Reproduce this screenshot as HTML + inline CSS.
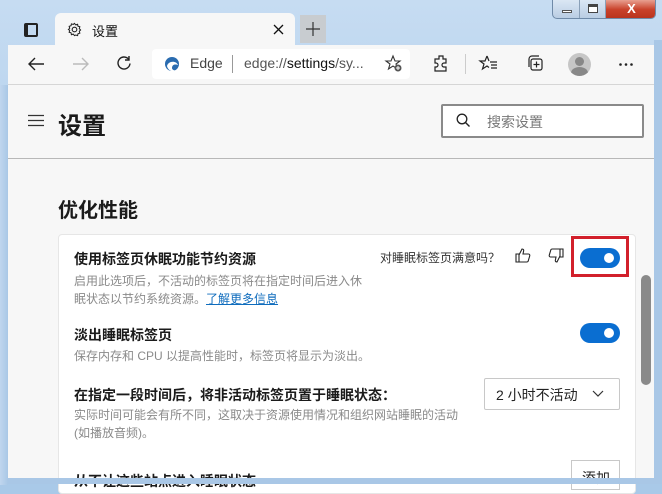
<!DOCTYPE html>
<html><head><meta charset="utf-8"><style>
*{box-sizing:border-box;margin:0;padding:0}
body{width:662px;height:484px;overflow:hidden;background:#a9c9e8;font-family:"Liberation Sans","Noto Sans CJK SC",sans-serif;position:relative}
.abs{position:absolute}
.frame{left:0;top:0;width:662px;height:484px;background:linear-gradient(180deg,#c6dcf2 0%,#b4d0ec 40%,#a6c6e6 100%)}
.tab{left:55px;top:13px;width:240px;height:34px;background:#f7f7f7;border-radius:6px 6px 0 0}
.toolbar{left:8px;top:45px;width:646px;height:40px;background:#f7f7f7;border-bottom:1px solid #d6d6d6}
.addr{left:152px;top:49px;width:258px;height:30px;background:#fff;border-radius:4px}
.content{left:8px;top:85px;width:646px;height:393px;background:#f7f7f7}
.card{left:58px;top:234px;width:578px;height:260px;background:#fff;border:1px solid #e6e6e6;border-radius:4px}
.t{font-size:14px;color:#1b1b1b;font-weight:600}
.d{font-size:12px;color:#8a8a8a;line-height:18px}
.tog{width:40px;height:20px;border-radius:10px;background:#0a6ed1}
.tog::after{content:"";position:absolute;right:6px;top:5px;width:10px;height:10px;border-radius:5px;background:#fff}
svg{position:absolute;overflow:visible}
</style></head><body>
<div class="abs frame"></div>
<div class="abs" style="left:552px;top:0;width:104px;height:19px;border:1px solid #6f8aa8;border-top:none;border-radius:0 0 5px 5px;background:linear-gradient(#dbe7f4,#b9cde3);overflow:hidden">
<div class="abs" style="left:0;top:0;width:27px;height:19px;border-right:1px solid #8aa0b8"></div>
<div class="abs" style="left:9px;top:10px;width:10px;height:3px;background:#fff;border:1px solid #555"></div>
<div class="abs" style="left:27px;top:0;width:26px;height:19px;border-right:1px solid #8aa0b8"></div>
<div class="abs" style="left:35px;top:4px;width:10px;height:9px;border:1px solid #444;border-top-width:3px;background:#fff"></div>
<div class="abs" style="left:53px;top:0;width:51px;height:19px;background:linear-gradient(#e8a090,#c9422b 50%,#b8321c)"></div>
<div class="abs" style="left:53px;top:0;width:51px;height:19px;color:#fff;font-weight:bold;font-size:13px;text-align:center;line-height:17px">X</div>
</div>
<div class="abs" style="left:24px;top:23px;width:14px;height:14px;border:2px solid #222;border-radius:2px;border-left-width:4px"></div>
<div class="abs tab"></div>
<svg style="left:67px;top:22px" width="15" height="15" viewBox="0 0 16 16"><circle cx="8" cy="8" r="2.5" fill="none" stroke="#222" stroke-width="1.2"/><path d="M8 1.5l1.3 1.6 2-.6.4 2 2 .6-.6 2 1.4 1.4-1.4 1.4.6 2-2 .6-.4 2-2-.6L8 14.5l-1.3-1.6-2 .6-.4-2-2-.6.6-2L1.5 8l1.4-1.4-.6-2 2-.6.4-2 2 .6z" fill="none" stroke="#222" stroke-width="1.1"/></svg>
<div class="abs" style="left:92px;top:21px;font-size:13px;color:#111">设置</div>
<svg style="left:274px;top:25px" width="9" height="9"><path d="M0 0l9 9M9 0L0 9" stroke="#111" stroke-width="1.3"/></svg>
<div class="abs" style="left:300px;top:15px;width:26px;height:28px;background:#c8ccd0"></div>
<svg style="left:306px;top:22px" width="14" height="14"><path d="M7 0v14M0 7h14" stroke="#333" stroke-width="1.2"/></svg>
<div class="abs toolbar"></div>
<svg style="left:27px;top:56px" width="18" height="16"><path d="M17 8H2M8 2L2 8l6 6" fill="none" stroke="#222" stroke-width="1.4"/></svg>
<svg style="left:72px;top:56px" width="18" height="16"><path d="M1 8h15M10 2l6 6-6 6" fill="none" stroke="#bbb" stroke-width="1.4"/></svg>
<svg style="left:116px;top:55px" width="17" height="17"><path d="M14 8.5A6 6 0 1 1 12.5 4M13 1v4H9" fill="none" stroke="#222" stroke-width="1.4"/></svg>
<div class="abs addr"></div>
<svg style="left:164px;top:56px" width="16" height="16"><circle cx="8" cy="8" r="7" fill="#2a6cb0"/><path d="M3 10c1-5 9-6 11-1-2-1-6-1-6 3 0 2 3 3 5 2-3 3-9 1-10-4z" fill="#fff"/></svg>
<div class="abs" style="left:190px;top:55px;font-size:14px;color:#444">Edge</div>
<div class="abs" style="left:232px;top:55px;width:1px;height:18px;background:#999"></div>
<div class="abs" style="left:244px;top:55px;font-size:14px;color:#555">edge://<span style="color:#111">settings</span>/sy...</div>
<svg style="left:385px;top:55px" width="18" height="18"><path d="M8 1l2 5h5l-4 3 1.5 5L8 11l-4.5 3L5 9 1 6h5z" fill="none" stroke="#333" stroke-width="1.1"/><circle cx="13" cy="13" r="3.5" fill="#555"/><path d="M13 11v4M11 13h4" stroke="#fff" stroke-width="1"/></svg>
<svg style="left:432px;top:54px" width="18" height="18"><path d="M7 2h4v3h3v4h-2a2 2 0 0 0 0 4h2v4H3v-4h1a2 2 0 0 0 0-4H3V5h4z" fill="none" stroke="#222" stroke-width="1.2"/></svg>
<div class="abs" style="left:465px;top:54px;width:1px;height:20px;background:#ccc"></div>
<svg style="left:480px;top:55px" width="18" height="18"><path d="M7 1l2 5h-0M7 1L5 6H0l4 3-1.5 5L7 11l2 1.5" fill="none" stroke="#222" stroke-width="1.2"/><path d="M10 7h7M11 10h6M11 13h6" stroke="#222" stroke-width="1.2"/></svg>
<svg style="left:526px;top:54px" width="18" height="18"><rect x="5" y="5" width="11" height="11" rx="2" fill="none" stroke="#222" stroke-width="1.2"/><path d="M3 13V5a3 3 0 0 1 3-3h7M10.5 7.5v6M7.5 10.5h6" fill="none" stroke="#222" stroke-width="1.2"/></svg>
<div class="abs" style="left:568px;top:53px;width:23px;height:23px;border-radius:50%;background:#c6c6c6;overflow:hidden"><div class="abs" style="left:7px;top:4px;width:9px;height:9px;border-radius:50%;background:#888"></div><div class="abs" style="left:3px;top:14px;width:17px;height:12px;border-radius:50%;background:#888"></div></div>
<svg style="left:619px;top:63px" width="14" height="3"><circle cx="1.5" cy="1.5" r="1.3" fill="#222"/><circle cx="7" cy="1.5" r="1.3" fill="#222"/><circle cx="12.5" cy="1.5" r="1.3" fill="#222"/></svg>
<div class="abs content"></div>
<svg style="left:28px;top:115px" width="16" height="11"><path d="M0 .5h16M0 5.5h16M0 10.5h16" stroke="#333" stroke-width="1.2"/></svg>
<div class="abs" style="left:58px;top:106px;font-size:24px;font-weight:bold;color:#1b1b1b">设置</div>
<div class="abs" style="left:441px;top:104px;width:203px;height:34px;border:2px solid #8a8a8a;background:#fff;border-radius:2px"></div>
<svg style="left:456px;top:113px" width="14" height="15"><circle cx="6" cy="6" r="4.8" fill="none" stroke="#222" stroke-width="1.3"/><path d="M9.5 9.5l4 4" stroke="#222" stroke-width="1.4"/></svg>
<div class="abs" style="left:487px;top:112px;font-size:14px;color:#777">搜索设置</div>
<div class="abs" style="left:8px;top:158px;width:646px;height:1px;background:#b8b8b8"></div>
<div class="abs" style="left:58px;top:194px;font-size:20px;font-weight:bold;color:#1b1b1b">优化性能</div>
<div class="abs card"></div>
<div class="abs t" style="left:74px;top:249px">使用标签页休眠功能节约资源</div>
<div class="abs" style="left:380px;top:249px;font-size:12px;color:#333">对睡眠标签页满意吗？</div>
<svg style="left:515px;top:247px" width="16" height="16"><path d="M1 7h3v8H1zM4 8l3-6c1.5 0 2 1 1.5 2.5L8 7h5.5c1 0 1.5 1 1.2 2l-1.5 5c-.2.7-.8 1-1.5 1H4" fill="none" stroke="#222" stroke-width="1.1"/></svg>
<svg style="left:548px;top:248px" width="16" height="16"><path d="M15 9h-3V1h3zM12 8l-3 6c-1.5 0-2-1-1.5-2.5L8 9H2.5c-1 0-1.5-1-1.2-2l1.5-5c.2-.7.8-1 1.5-1H12" fill="none" stroke="#222" stroke-width="1.1"/></svg>
<div class="abs" style="left:571px;top:236px;width:58px;height:41px;border:3px solid #d2202b"></div>
<div class="abs tog" style="left:580px;top:248px"></div>
<div class="abs d" style="left:74px;top:272px;width:292px">启用此选项后，不活动的标签页将在指定时间后进入休眠状态以节约系统资源。<span style="color:#0f6cbd;text-decoration:underline">了解更多信息</span></div>
<div class="abs t" style="left:74px;top:325px">淡出睡眠标签页</div>
<div class="abs tog" style="left:580px;top:323px"></div>
<div class="abs d" style="left:74px;top:347px">保存内存和 CPU 以提高性能时，标签页将显示为淡出。</div>
<div class="abs t" style="left:74px;top:385px">在指定一段时间后，将非活动标签页置于睡眠状态：</div>
<div class="abs" style="left:484px;top:378px;width:136px;height:32px;border:1px solid #c8c8c8;background:#fff;border-radius:2px"></div>
<div class="abs" style="left:496px;top:385px;font-size:14px;color:#222">2 小时不活动</div>
<svg style="left:592px;top:390px" width="12" height="8"><path d="M1 1l5 5 5-5" fill="none" stroke="#333" stroke-width="1.2"/></svg>
<div class="abs d" style="left:74px;top:406px;width:388px">实际时间可能会有所不同，这取决于资源使用情况和组织网站睡眠的活动<br>(如播放音频)。</div>
<div class="abs t" style="left:74px;top:471px">从不让这些站点进入睡眠状态</div>
<div class="abs" style="left:571px;top:460px;width:49px;height:30px;border:1px solid #c8c8c8;background:#fff;font-size:14px;padding:7px 0 0 10px;color:#222">添加</div>
<div class="abs" style="left:641px;top:275px;width:10px;height:110px;border-radius:5px;background:#8a8a8a"></div>
<div class="abs" style="left:0;top:478px;width:662px;height:6px;background:#a9c7e6"></div>
<div class="abs" style="left:0;top:85px;width:8px;height:400px;background:linear-gradient(90deg,#c0d6ee,#a9c7e6)"></div>
<div class="abs" style="left:654px;top:40px;width:8px;height:444px;background:#a9c7e6"></div>
</body></html>
